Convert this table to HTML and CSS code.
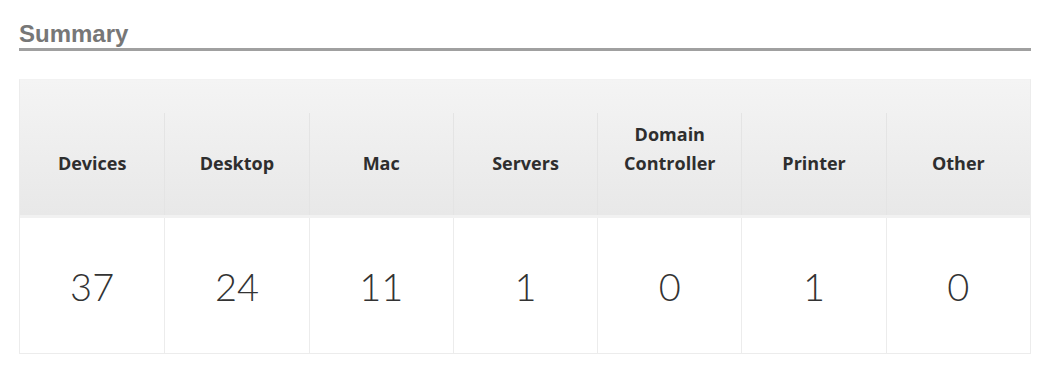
FILE: index.html
```html
<!DOCTYPE html>
<html>
<head>
<meta charset="utf-8">
<link rel="stylesheet" href="styles.css">
</head>
<body>
<section class="summary">
  <h2 class="title">Summary</h2>
  <div class="table">
    <div class="thead">
      <div class="row">
        <div class="th">Devices</div>
        <div class="th">Desktop</div>
        <div class="th">Mac</div>
        <div class="th">Servers</div>
        <div class="th">Domain<br>Controller</div>
        <div class="th">Printer</div>
        <div class="th">Other</div>
      </div>
    </div>
    <div class="row body">
      <div class="td">37</div>
      <div class="td">24</div>
      <div class="td">11</div>
      <div class="td">1</div>
      <div class="td">0</div>
      <div class="td">1</div>
      <div class="td">0</div>
    </div>
  </div>
</section>
</body>
</html>
```

FILE: styles.css
```css
html, body {
  margin: 0;
  padding: 0;
  background: #fff;
}
.summary {
  padding: 19px 22px 0 19px;
}
.title {
  margin: 0;
  padding: 1px 0 0 0;
  font-family: "Liberation Sans", Arial, sans-serif;
  font-weight: bold;
  font-size: 24px;
  line-height: 28px;
  color: #777;
  border-bottom: 3px solid #a0a0a0;
}
.table {
  margin-top: 28px;
  border: 1px solid #ececec;
  border-top-color: #f2f2f2;
}
.thead {
  background: linear-gradient(#f4f4f4, #e8e8e8);
  padding-top: 33px;
  border-bottom: 3px solid #f1f1f1;
}
.row {
  display: grid;
  grid-template-columns: repeat(7, 1fr);
}
.th {
  display: flex;
  align-items: flex-end;
  justify-content: center;
  text-align: center;
  height: 102px;
  box-sizing: border-box;
  padding-bottom: 37px;
  font-family: "Open Sans", sans-serif;
  font-weight: 700;
  font-size: 18px;
  line-height: 29px;
  color: #2e2e2e;
  border-left: 1px solid #e4e4e4;
}
.th:first-child {
  border-left: none;
}
.body {
  height: 135px;
}
.td {
  display: flex;
  align-items: center;
  justify-content: center;
  font-family: Lato, sans-serif;
  font-weight: 300;
  font-size: 38px;
  color: #333;
  border-left: 1px solid #ececec;
}
.td:first-child {
  border-left: none;
}
```
